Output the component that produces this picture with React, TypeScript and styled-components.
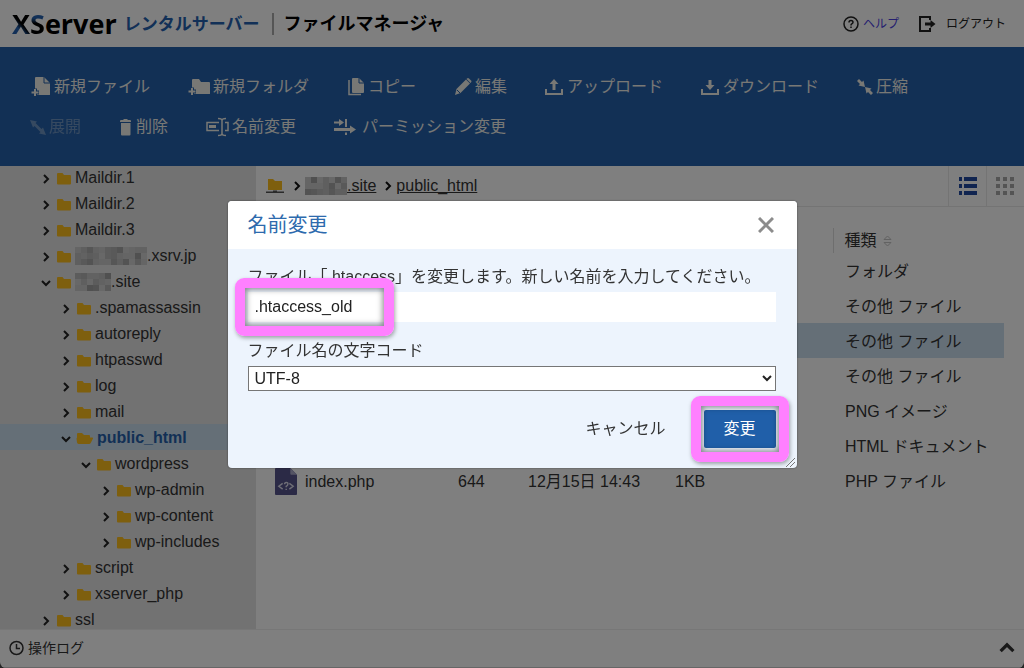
import React from "react";
import styled, { createGlobalStyle, css } from "styled-components";

const GlobalStyle = createGlobalStyle`
  * { box-sizing: border-box; }
  html { background: #4a4a4a; }
  body {
    margin: 0;
    color: #333;
    font: 16px/24px "Liberation Sans", "Noto Sans CJK JP", sans-serif;
  }
  button, input, select { font: inherit; color: inherit; }
  button { border: 0; padding: 0; background: none; cursor: pointer; }
  svg { display: block; flex: none; }
`;

const Shell = styled.div`
  display: flex;
  flex-direction: column;
  height: 100vh;
  overflow: hidden;
  background: #fff;
  border-radius: 0 0 6px 6px;
`;

/* ---------- header ---------- */

const Header = styled.header`
  display: flex;
  align-items: center;
  flex: none;
  height: 47px;
  padding: 0 18px 0 12px;
`;

const Brand = styled.a`
  display: flex;
  align-items: center;
  color: #000;
  text-decoration: none;
`;

const BrandName = styled.span`
  font: 700 27px/32px "Open Sans", sans-serif;
`;

const BrandLetter = styled.span<{ $angle: number }>`
  color: transparent;
  background: linear-gradient(${(p) => p.$angle}deg, #2461ae 36%, #000 50%);
  background-clip: text;
`;

const BrandService = styled.span`
  margin-left: 7px;
  padding-top: 3px;
  color: #2461ae;
  font-size: 17px;
  font-weight: 700;
`;

const AppTitle = styled.h1`
  margin: 0 auto 0 12px;
  padding-left: 10px;
  border-left: 2px solid #aaa;
  color: #000;
  font-size: 18px;
  line-height: 22px;
  font-weight: 700;
`;

const HeaderLink = styled.a<{ $accent?: boolean }>`
  display: flex;
  align-items: center;
  gap: ${(p) => (p.$accent ? 4 : 10)}px;
  margin-left: 19px;
  color: ${(p) => (p.$accent ? "#4a3fe0" : "#222")};
  font-size: 12px;
  text-decoration: none;
`;

/* ---------- toolbar ---------- */

const Toolbar = styled.nav`
  display: flex;
  flex-wrap: wrap;
  align-content: flex-start;
  column-gap: 38px;
  row-gap: 16px;
  flex: none;
  min-height: 119px;
  padding: 28px 80px 27px 30px;
  background: #2560aa;
`;

const Tool = styled.button<{ $slot: number }>`
  display: flex;
  align-items: center;
  height: 24px;
  color: #f0f0ea;
  white-space: nowrap;

  svg { width: ${(p) => p.$slot}px; height: 20px; }
  &:disabled { opacity: 0.35; }
`;

/* ---------- body ---------- */

const Body = styled.div`
  display: flex;
  flex: 1;
  min-height: 0;
`;

const Sidebar = styled.aside`
  flex: none;
  width: 256px;
  overflow: hidden;
  background: #e4e4e4;
`;

const Tree = styled.ul`
  margin: -2px 0 0;
  padding: 0;
  list-style: none;
`;

const TreeRow = styled.li<{ $level: number; $current?: boolean }>`
  display: flex;
  align-items: center;
  height: 26px;
  padding: 1px 0 0 ${(p) => 21 + p.$level * 20}px;
  ${(p) =>
    p.$current &&
    css`
      background: #cbdfef;
      color: #2560aa;
      font-weight: 700;
    `}
`;

const TreeLink = styled.a`
  display: flex;
  align-items: center;
  color: inherit;
  text-decoration: none;

  svg:first-child { margin-right: 3px; }
`;

const Toggle = styled.button`
  width: 10px;
  margin: 2px 5px 0 0;
  color: #222;
`;

const Main = styled.main`
  flex: 1;
  min-width: 0;
`;

const PathBar = styled.div`
  display: flex;
  align-items: stretch;
  height: 41px;
  border-bottom: 1px solid #e8e8e8;
`;

const Path = styled.nav`
  display: flex;
  align-items: center;
  flex: 1;
  padding-left: 9px;
  color: #111;

  & > svg { margin: 0 3px 0 7px; }
`;

const PathLink = styled.a`
  display: flex;
  align-items: center;
  color: #333;
  text-decoration: underline;
`;

const ViewButton = styled.button<{ $on?: boolean }>`
  display: flex;
  align-items: center;
  justify-content: center;
  width: 38px;
  color: ${(p) => (p.$on ? "#2048a0" : "#a8a8a8")};
  border-left: 1px solid #e8e8e8;
`;

const FileTable = styled.table`
  width: calc(100% - 28px);
  margin: 21px 20px 0 8px;
  table-layout: fixed;
  border-collapse: collapse;
  text-align: left;
`;

const Col = styled.col<{ $w?: number }>`
  width: ${(p) => (p.$w ? `${p.$w}px` : "auto")};
`;

const HeadCell = styled.th`
  height: 25px;
  padding: 0 11px;
  font-weight: 400;
  line-height: 24px;
  border-left: 1px solid #dcdcdc;
`;

const SortButton = styled.button`
  display: flex;
  align-items: center;
  gap: 6px;
`;

const FileRow = styled.tr<{ $selected?: boolean }>`
  height: 35px;
  background: ${(p) => (p.$selected ? "#cbdeef" : "transparent")};
`;

const Cell = styled.td`
  padding: 2px 0 0 11px;
  white-space: nowrap;
`;

const TypeCell = styled(Cell)`
  padding-left: 12px;
`;

const FileName = styled.a`
  display: flex;
  align-items: center;
  gap: 8px;
  color: inherit;
  text-decoration: none;
`;

const Footer = styled.footer`
  display: flex;
  align-items: center;
  justify-content: space-between;
  flex: none;
  height: 39px;
  padding: 0 9px 2px;
  border-top: 1px solid #eee;
  border-bottom: 1px solid #ccc;
`;

const LogButton = styled.button`
  display: flex;
  align-items: center;
  gap: 4px;
  font-size: 14px;
`;

/* ---------- dialog ---------- */

const Backdrop = styled.div`
  position: fixed;
  inset: 0;
  display: flex;
  align-items: center;
  justify-content: center;
  background: rgba(0, 0, 0, 0.5);
`;

const Dialog = styled.form`
  position: relative;
  width: 569px;
  max-width: 100%;
  background: #edf4fd;
  border-radius: 4px;
  box-shadow: 0 0 2px rgba(0, 0, 0, 0.5);
`;

const DialogHead = styled.div`
  display: flex;
  align-items: center;
  justify-content: space-between;
  height: 48px;
  padding: 0 23px 0 20px;
  background: #fff;
  border-radius: 4px 4px 0 0;
`;

const DialogTitle = styled.h2`
  margin: 0;
  color: #2d6aad;
  font-size: 20px;
  font-weight: 400;
`;

const DialogBody = styled.div`
  padding: 16px 21px 20px 20px;
`;

const FieldLabel = styled.label`
  display: block;
  margin-bottom: 3px;
  white-space: nowrap;
`;

const Spot = styled.div`
  position: relative;
`;

const Marker = styled.span<{ $width?: number }>`
  position: absolute;
  top: -14px;
  bottom: -14px;
  left: -13px;
  ${(p) => (p.$width ? `width: ${p.$width}px;` : "right: -13px;")}
  border: 10px solid #ff80ff;
  border-radius: 9px;
  box-shadow: 1px 2px 4px rgba(0, 0, 0, 0.35), inset 0 0 6px 1px rgba(0, 0, 0, 0.5);
  pointer-events: none;
`;

const NameInput = styled.input`
  display: block;
  width: 100%;
  height: 30px;
  padding: 0 7px;
  color: #222;
  background: #fff;
  border: 0;
  outline: 0;
`;

const EncodingLabel = styled(FieldLabel)`
  margin-top: 17px;
`;

const EncodingSelect = styled.select`
  display: block;
  width: 100%;
  height: 25px;
  padding: 0 2px;
  color: #222;
  background: #fff;
  border: 1px solid #767676;
`;

const Actions = styled.div`
  display: flex;
  justify-content: flex-end;
  align-items: center;
  gap: 38px;
  margin-top: 19px;
`;

const SubmitButton = styled.button`
  display: block;
  width: 72px;
  height: 38px;
  color: #fff;
  background: #205fa9;
  border-radius: 2px;
`;

const Grip = styled.span`
  position: absolute;
  right: 2px;
  bottom: 1px;
  color: #777;
`;

/* ---------- drawings ---------- */

const Chevron = ({ dir, size = 10, weight = 2 }: { dir: "right" | "down" | "up"; size?: number; weight?: number }) => {
  const d = { right: "M3 1l4 4-4 4", down: "M1 3l4 4 4-4", up: "M1 7l4-4 4 4" }[dir];
  return (
    <svg width={size} height={size} viewBox="0 0 10 10" fill="none" stroke="currentColor" strokeWidth={weight}>
      <path d={d} />
    </svg>
  );
};

const FolderIcon = ({ open }: { open?: boolean }) =>
  open ? (
    <svg width="18" height="16" viewBox="0 0 18 16" fill="#fdbe1c">
      <path d="M1 7.500V4q0-1 1-1h4l2 2h5q1 0 1 1v1.500h2q1.500 0 1 1l-2 4q-.7 1.500-2 1.500H3q-1.500 0-2-1.500L.5 8.500z" />
    </svg>
  ) : (
    <svg width="16" height="16" viewBox="0 0 16 16" fill="#fdbe1c">
      <path d="M1 4q0-1 1-1h4.500l1.500 2h6q1 0 1 1v7.500q0 1-1 1H2q-1 0-1-1z" />
    </svg>
  );

const RootIcon = () => (
  <svg width="20" height="16" viewBox="0 0 20 16">
    <path fill="#fdbe1c" d="M3 1h5l2 2h7v9H3z" />
    <path fill="#555" d="M1 13.500h7v-1h4v1h7V15H1z" />
  </svg>
);

const tones = "9cbd8ea7dc6bd9c8ae7bcda9be8cdb7e";

/** Coarse block pattern that covers a private host name. */
const Mosaic = ({ cols, seed }: { cols: number; seed: number }) => (
  <svg width={cols * 6} height="18" viewBox={`0 0 ${cols * 6} 18`} aria-hidden>
    {Array.from({ length: cols * 3 }, (_, i) => {
      const t = parseInt(tones[(i * 7 + seed + Math.floor(i / 5)) % 32], 16);
      const v = 125 + t * 6;
      return (
        <rect
          key={i}
          x={(i % cols) * 6}
          y={Math.floor(i / cols) * 6}
          width="6"
          height="6"
          fill={`rgb(${v},${v},${v})`}
        />
      );
    })}
  </svg>
);

const barColor = "#2560aa";

const art: Record<string, React.ReactNode> = {
  file: (
    <>
      <path d="M6 0h8l6 6v11.500q0 .5-.5.500H5V1q0-1 1-1z" />
      <path d="M14 0v6h6" fill="none" stroke={barColor} />
      <path d="M5 11.500v8M1 15.500h8" fill="none" stroke={barColor} strokeWidth="4" />
      <path d="M5 12v7M1.500 15.500h7" fill="none" stroke="currentColor" strokeWidth="2" />
    </>
  ),
  folder: (
    <>
      <path d="M5 2h6l2 3h8q1 0 1 1v10.500q0 .5-.5.500H4V3q0-1 1-1z" />
      <path d="M4 10.500v8M0 14.500h8" fill="none" stroke={barColor} strokeWidth="4" />
      <path d="M4 11v7M.5 14.500h7" fill="none" stroke="currentColor" strokeWidth="2" />
    </>
  ),
  copy: (
    <>
      <path d="M6 1h6l5 5v9q0 1-1 1H6q-1 0-1-1V2q0-1 1-1z" />
      <path d="M12 1v5h5" fill="none" stroke={barColor} />
      <path d="M2 3v14.500h12" fill="none" stroke="currentColor" strokeWidth="1.500" />
    </>
  ),
  edit: (
    <>
      <path d="M1 18l1.500-6L12 2.500 16 6.500 6.500 16z" />
      <path d="M13 1.500q1-1 2 0l2 2q1 1 0 2L16.500 6 12.500 2z" />
      <path d="M3 13l3 3" stroke={barColor} />
    </>
  ),
  upload: (
    <>
      <path d="M1 12v5h16v-5" fill="none" stroke="currentColor" strokeWidth="2" />
      <path d="M9 2l4.500 5h-3v6h-3V7h-3z" />
    </>
  ),
  download: (
    <>
      <path d="M1 12v5h16v-5" fill="none" stroke="currentColor" strokeWidth="2" />
      <path d="M9 13l4.500-5h-3V3h-3v5h-3z" />
    </>
  ),
  compress: <path d="M0 4l2-2 3 3 1.500-1.500L8 10 1.500 8.500 3 7zM16 16l-2 2-3-3-1.500 1.500L8 10l6.500 1.500L13 13z" />,
  expand: <path d="M0 3l7 1.500L5.500 6l6 6 1.500-1.500L16 18l-7-1.500 1.500-1.500-6-6L3 10.500z" />,
  trash: <path d="M1 5V4q0-1 1-1h2.500V2h4v1H11q1 0 1 1v1zM2 6h9.500v11.500q0 1-1 1H3q-1 0-1-1z" />,
  rename: (
    <g fill="none" stroke="currentColor" strokeWidth="1.500">
      <path d="M13 5.500H1v8h12M19 5.500h3v8h-3M12 1.500q4 0 4 2v13q0 2-4 2M20 1.500q-4 0-4 2v13q0 2 4 2" />
      <path d="M3 9.500h7" strokeWidth="3" />
    </g>
  ),
  permission: <path d="M0 4.500h5V2l5 3.500L5 9V6.500H0zM0 11h16V8.500l6 4-6 4V14H0zM11 2h2v8h-2zM11 15.500h2V18h-2z" />,
};

const ToolIcon = ({ name, width }: { name: string; width: number }) => (
  <svg viewBox={`0 0 ${width} 20`} fill="currentColor" aria-hidden>
    {art[name]}
  </svg>
);

const HelpIcon = () => (
  <svg width="16" height="16" viewBox="0 0 16 16" fill="none" stroke="#222" strokeWidth="1.500">
    <circle cx="8" cy="8" r="7" />
    <path d="M6 6.500q0-2 2-2t2 1.800q0 1-1.200 1.600Q8 8.300 8 9.500M8 10.500v1.500" />
  </svg>
);

const LogoutIcon = () => (
  <svg width="18" height="16" viewBox="0 0 18 16">
    <path d="M12 4V1H2v14h10v-3" fill="none" stroke="#222" strokeWidth="2" />
    <path d="M7 6.500h5.500V4l5 4-5 4V9.500H7z" fill="#222" />
  </svg>
);

const ListIcon = () => (
  <svg width="20" height="20" viewBox="0 0 20 20" fill="currentColor">
    {[1, 8, 15].map((y) => (
      <path key={y} d={`M1 ${y}h3v4H1zM6 ${y}h13v4H6z`} />
    ))}
  </svg>
);

const GridIcon = () => (
  <svg width="20" height="20" viewBox="0 0 20 20" fill="currentColor">
    {[1, 8, 15].map((y) => (
      <path key={y} d={`M0 ${y}h4v4H0zM7 ${y}h4v4H7zM14 ${y}h4v4h-4z`} />
    ))}
  </svg>
);

const SortIcon = () => (
  <svg width="9" height="12" viewBox="0 0 9 12" fill="none" stroke="#c4c4c4">
    <path d="M1 4.500h7L4.500 1zM1 7.500h7L4.500 11z" />
  </svg>
);

const PhpIcon = () => (
  <svg width="22" height="27" viewBox="0 0 23 28" aria-hidden>
    <path fill="#56558c" d="M0 1q0-1 1-1h15l7 7v20q0 1-1 1H1q-1 0-1-1z" />
    <path fill="#a9a8c8" d="M16 0l7 7h-6q-1 0-1-1z" />
    <g fill="none" stroke="#dddcec" strokeWidth="1.500">
      <path d="M8 16l-4 3 4 3M15 16l4 3-4 3M10 17q0-2 1.800-2t1.700 1.600-1.800 2.400v1M11.700 21.500V23" />
    </g>
  </svg>
);

const ClockIcon = () => (
  <svg width="15" height="16" viewBox="0 0 15 16" fill="none" stroke="#333" strokeWidth="1.500">
    <circle cx="7.500" cy="8" r="6.500" />
    <path d="M7.500 4v4.500H11" />
  </svg>
);

/* ---------- data ---------- */

const tools = [
  { icon: "file", label: "新規ファイル", slot: 24 },
  { icon: "folder", label: "新規フォルダ", slot: 25 },
  { icon: "copy", label: "コピー", slot: 21 },
  { icon: "edit", label: "編集", slot: 21 },
  { icon: "upload", label: "アップロード", slot: 22 },
  { icon: "download", label: "ダウンロード", slot: 22 },
  { icon: "compress", label: "圧縮", slot: 19 },
  { icon: "expand", label: "展開", slot: 19, disabled: true },
  { icon: "trash", label: "削除", slot: 17 },
  { icon: "rename", label: "名前変更", slot: 26 },
  { icon: "permission", label: "パーミッション変更", slot: 28 },
];

type Node = { name: string; level: number; open?: boolean; current?: boolean; mask?: number };

const nodes: Node[] = [
  { name: "Maildir.1", level: 1 },
  { name: "Maildir.2", level: 1 },
  { name: "Maildir.3", level: 1 },
  { name: ".xsrv.jp", level: 1, mask: 12 },
  { name: ".site", level: 1, open: true, mask: 6 },
  { name: ".spamassassin", level: 2 },
  { name: "autoreply", level: 2 },
  { name: "htpasswd", level: 2 },
  { name: "log", level: 2 },
  { name: "mail", level: 2 },
  { name: "public_html", level: 2, open: true, current: true },
  { name: "wordpress", level: 3, open: true },
  { name: "wp-admin", level: 4 },
  { name: "wp-content", level: 4 },
  { name: "wp-includes", level: 4 },
  { name: "script", level: 2 },
  { name: "xserver_php", level: 2 },
  { name: "ssl", level: 1 },
];

const files = [
  { type: "フォルダ" },
  { type: "その他 ファイル" },
  { type: "その他 ファイル", selected: true },
  { type: "その他 ファイル" },
  { type: "PNG イメージ" },
  { type: "HTML ドキュメント" },
  { type: "PHP ファイル", name: "index.php", mode: "644", date: "12月15日 14:43", size: "1KB" },
];

export default function App() {
  return (
    <>
      <GlobalStyle />
      <Shell>
        <Header>
          <Brand href="#">
            <BrandName>
              <BrandLetter $angle={45}>X</BrandLetter>
              <BrandLetter $angle={180}>S</BrandLetter>erver
            </BrandName>
            <BrandService>レンタルサーバー</BrandService>
          </Brand>
          <AppTitle>ファイルマネージャ</AppTitle>
          <HeaderLink href="#" $accent>
            <HelpIcon />
            ヘルプ
          </HeaderLink>
          <HeaderLink href="#">
            <LogoutIcon />
            ログアウト
          </HeaderLink>
        </Header>

        <Toolbar>
          {tools.map((t) => (
            <Tool key={t.icon} type="button" $slot={t.slot} disabled={t.disabled}>
              <ToolIcon name={t.icon} width={t.slot} />
              {t.label}
            </Tool>
          ))}
        </Toolbar>

        <Body>
          <Sidebar>
            <Tree>
              {nodes.map((n) => (
                <TreeRow key={n.name} $level={n.level} $current={n.current}>
                  <Toggle type="button" aria-label={n.open ? "閉じる" : "開く"}>
                    <Chevron dir={n.open ? "down" : "right"} />
                  </Toggle>
                  <TreeLink href="#">
                    <FolderIcon open={n.current} />
                    {n.mask && <Mosaic cols={n.mask} seed={n.mask} />}
                    {n.name}
                  </TreeLink>
                </TreeRow>
              ))}
            </Tree>
          </Sidebar>

          <Main>
            <PathBar>
              <Path>
                <PathLink href="#" aria-label="ルート">
                  <RootIcon />
                </PathLink>
                <Chevron dir="right" />
                <PathLink href="#">
                  <Mosaic cols={7} seed={3} />
                  .site
                </PathLink>
                <Chevron dir="right" />
                <PathLink href="#">public_html</PathLink>
              </Path>
              <ViewButton type="button" $on aria-label="リスト表示">
                <ListIcon />
              </ViewButton>
              <ViewButton type="button" aria-label="アイコン表示">
                <GridIcon />
              </ViewButton>
            </PathBar>
            <FileTable>
              <colgroup>
                <Col $w={183} />
                <Col $w={70} />
                <Col $w={147} />
                <Col $w={169} />
                <Col />
              </colgroup>
              <thead>
                <tr>
                  <td colSpan={4} />
                  <HeadCell scope="col">
                    <SortButton type="button">
                      種類
                      <SortIcon />
                    </SortButton>
                  </HeadCell>
                </tr>
              </thead>
              <tbody>
                {files.map((f, i) => (
                  <FileRow key={i} $selected={f.selected}>
                    <Cell>
                      {f.name && (
                        <FileName href="#">
                          <PhpIcon />
                          {f.name}
                        </FileName>
                      )}
                    </Cell>
                    <Cell>{f.mode}</Cell>
                    <Cell>{f.date}</Cell>
                    <Cell>{f.size}</Cell>
                    <TypeCell>{f.type}</TypeCell>
                  </FileRow>
                ))}
              </tbody>
            </FileTable>
          </Main>
        </Body>

        <Footer>
          <LogButton type="button">
            <ClockIcon />
            操作ログ
          </LogButton>
          <LogButton type="button" aria-label="ログを開く">
            <Chevron dir="up" size={16} />
          </LogButton>
        </Footer>
      </Shell>

      <Backdrop>
        <Dialog role="dialog" aria-labelledby="rename-title" onSubmit={(e) => e.preventDefault()}>
          <DialogHead>
            <DialogTitle id="rename-title">名前変更</DialogTitle>
            <button type="button" aria-label="閉じる">
              <svg width="16" height="16" viewBox="0 0 16 16" stroke="#8c8c8c" strokeWidth="3">
                <path d="M1 1l14 14M15 1L1 15" />
              </svg>
            </button>
          </DialogHead>
          <DialogBody>
            <FieldLabel htmlFor="new-name">
              ファイル「.htaccess」を変更します。新しい名前を入力してください。
            </FieldLabel>
            <Spot>
              <NameInput id="new-name" defaultValue=".htaccess_old" />
              <Marker $width={159} />
            </Spot>
            <EncodingLabel htmlFor="encoding">ファイル名の文字コード</EncodingLabel>
            <EncodingSelect id="encoding" defaultValue="UTF-8">
              <option>UTF-8</option>
            </EncodingSelect>
            <Actions>
              <button type="button">キャンセル</button>
              <Spot>
                <SubmitButton type="submit">変更</SubmitButton>
                <Marker />
              </Spot>
            </Actions>
          </DialogBody>
          <Grip>
            <svg width="9" height="9" viewBox="0 0 9 9" fill="none" stroke="currentColor">
              <path d="M0 9l9-9M4 9l5-5" />
            </svg>
          </Grip>
        </Dialog>
      </Backdrop>
    </>
  );
}
